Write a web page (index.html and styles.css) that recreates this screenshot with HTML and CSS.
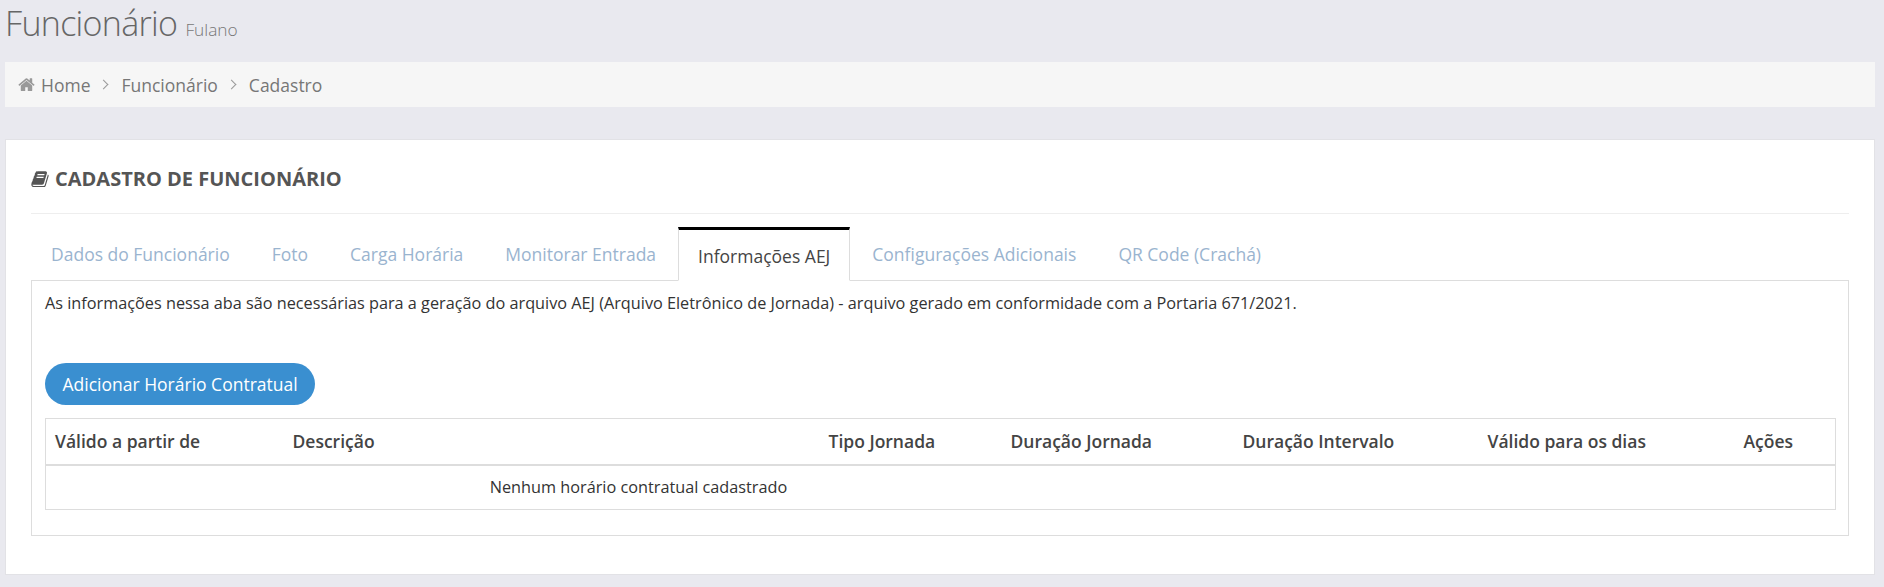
FILE: index.html
```html
<!DOCTYPE html>
<html lang="pt-BR">
<head>
<meta charset="utf-8">
<title>Funcionário</title>
<link rel="stylesheet" href="styles.css">
</head>
<body>
<h1 class="page-title">Funcionário <small>Fulano</small></h1>
<nav class="breadcrumb">
  <svg class="home" viewBox="0 0 1664 1408"><path fill="currentColor" d="M1408 768v480q0 26-19 45t-45 19H960V928H704v384H320q-26 0-45-19t-19-45V768q0-1 .5-3t.5-3l575-474 575 474q1 2 1 6zm223-69-62 74q-8 9-21 11h-3q-13 0-21-7L832 200 140 777q-12 8-24 7-13-2-21-11l-62-74q-8-10-7-23.500T37 654L756 55q32-26 76-26t76 26l244 204V64q0-14 9-23t23-9h192q14 0 23 9t9 23v408l219 182q10 8 11 21.500t-7 23.500z"/></svg>
  <span>Home</span><i class="sep"></i><span>Funcionário</span><i class="sep"></i><span>Cadastro</span>
</nav>
<main class="card">
  <h2 class="card-title">
    <svg class="book" viewBox="0 0 1664 1536"><path fill="currentColor" d="M1639 382q40 57 18 129l-275 906q-19 64-76.500 107.500T1183 1568H260q-77 0-148.500-53.500T12 1383q-24-67-2-127 0-4 3-27t4-37q1-8-3-21.500t-3-19.500q2-11 8-21t16.500-23.500T52 1083q23-38 45-91.500t30-91.500q3-10 .5-30t-.5-28q3-11 17-28t17-23q21-36 42-92t25-90q1-9-2.500-32t.5-28q4-13 22-30.500t22-22.500q19-26 42.500-84.500T339 316q1-8-3-25.500t-2-26.500q2-8 9-18t18-23 17-21q8-12 16.500-30.500t15-35 16-36 19.500-32 26.500-23.500 36-11.500T555 37l-1 3q38-9 51-9h761q74 0 114 56t18 130l-274 906q-36 119-71.500 153.500T1024 1311H155q-27 0-38 15-11 16-1 43 24 70 144 70h923q29 0 56-15.500t35-41.500l300-987q7-22 5-57 38 15 60 44zm-1064 2q-4 13 2 22.500t20 9.500h608q13 0 25.500-9.500T1247 384l21-64q4-13-2-22.500t-20-9.500H638q-13 0-25.500 9.500T596 320zm-83 256q-4 13 2 22.500t20 9.500h608q13 0 25.500-9.500T1164 640l21-64q4-13-2-22.500t-20-9.500H555q-13 0-25.500 9.500T513 576z"/></svg>
    CADASTRO DE FUNCIONÁRIO
  </h2>
  <div class="tabs">
    <a class="tab">Dados do Funcionário</a>
    <a class="tab">Foto</a>
    <a class="tab">Carga Horária</a>
    <a class="tab">Monitorar Entrada</a>
    <a class="tab active">Informações AEJ</a>
    <a class="tab">Configurações Adicionais</a>
    <a class="tab">QR Code (Crachá)</a>
  </div>
  <section class="pane">
    <p class="intro">As informações nessa aba são necessárias para a geração do arquivo AEJ (Arquivo Eletrônico de Jornada) - arquivo gerado em conformidade com a Portaria 671/2021.</p>
    <button class="btn">Adicionar Horário Contratual</button>
    <table class="grid">
      <colgroup>
        <col class="c1"><col class="c2"><col class="c3"><col class="c4"><col class="c5"><col class="c6"><col class="c7">
      </colgroup>
      <thead>
        <tr><th>Válido a partir de</th><th>Descrição</th><th>Tipo Jornada</th><th>Duração Jornada</th><th>Duração Intervalo</th><th>Válido para os dias</th><th>Ações</th></tr>
      </thead>
      <tbody>
        <tr><td colspan="7" class="empty">Nenhum horário contratual cadastrado</td></tr>
      </tbody>
    </table>
  </section>
</main>
</body>
</html>
```

FILE: styles.css
```css
* { box-sizing: border-box; }
html, body { margin: 0; padding: 0; }
body {
  width: 1884px;
  height: 587px;
  overflow: hidden;
  background: #e9e9ef;
  font-family: "Open Sans", sans-serif;
  color: #555;
  padding: 0 9px 0 5px;
}
.page-title {
  margin: 0;
  padding-top: 3px;
  height: 62px;
  font-size: 34px;
  line-height: 40px;
  font-weight: 300;
  color: #666;
  letter-spacing: -0.7px;
  white-space: nowrap;
}
.page-title small {
  font-size: 17.3px;
  font-weight: 300;
  color: #777;
  letter-spacing: 0;
}
.breadcrumb {
  display: flex;
  align-items: center;
  height: 45px;
  padding: 0 13px;
  background: #f6f6f6;
  font-size: 17.5px;
  color: #777;
  margin-bottom: 32px;
}
.home { margin-right: 6px; color: #999; width: 17px; height: 14px; }
.sep {
  width: 7px;
  height: 7px;
  margin: 0 14px 0 10px;
  border-top: 1px solid #999;
  border-right: 1px solid #999;
  transform: rotate(45deg);
}
.card {
  background: #fff;
  height: 436px;
  padding: 0 25px;
  border: 1px solid #e2e2e6;
}
.book { width: 18px; height: 16px; }
.card-title {
  display: flex;
  align-items: center;
  gap: 6px;
  margin: 0;
  height: 74px;
  padding-top: 4px;
  border-bottom: 1px solid #eee;
  font-size: 20px;
  font-weight: 700;
  color: #555;
}
.tabs { display: flex; height: 54px; margin-top: 13px; margin-bottom: -1px; }
.tab {
  position: relative;
  padding: 0 20px;
  height: 54px;
  line-height: 54px;
  margin-right: 2px;
  font-size: 17.5px;
  color: #9ab4cf;
  white-space: nowrap;
}
.tab.active {
  color: #444;
  background: #fff;
  border: 1px solid #ddd;
  border-top: 3px solid #000;
  border-bottom: 1px solid #fff;
  line-height: 52px;
  padding: 0 19px;
}
.pane {
  border: 1px solid #ddd;
  height: 256px;
  padding: 0 13px;
}
.intro { margin: 0; padding-top: 12px; font-size: 16.25px; line-height: 20px; color: #333; height: 82px; white-space: nowrap; }
.btn {
  display: block;
  height: 42px;
  padding: 0 17.5px;
  background: #3a8fd0;
  color: #fff;
  border: 0;
  border-radius: 21px;
  font-family: inherit;
  font-size: 17.5px;
  margin-bottom: 13px;
}
.grid { width: 1790px; table-layout: fixed; border-collapse: collapse; border: 1px solid #ddd; }
.c1 { width: 238px; } .c2 { width: 536px; } .c3 { width: 182px; } .c4 { width: 232px; }
.c5 { width: 245px; } .c6 { width: 256px; } .c7 { width: 101px; }
.grid th { height: 46px; padding: 0 9px; text-align: left; font-size: 17.5px; font-weight: 600; color: #444; border-bottom: 2px solid #ddd; white-space: nowrap; }
.grid td { height: 45px; }
.empty { text-align: center; font-size: 16.25px; color: #333; padding: 0 604px 0 0; }
```
